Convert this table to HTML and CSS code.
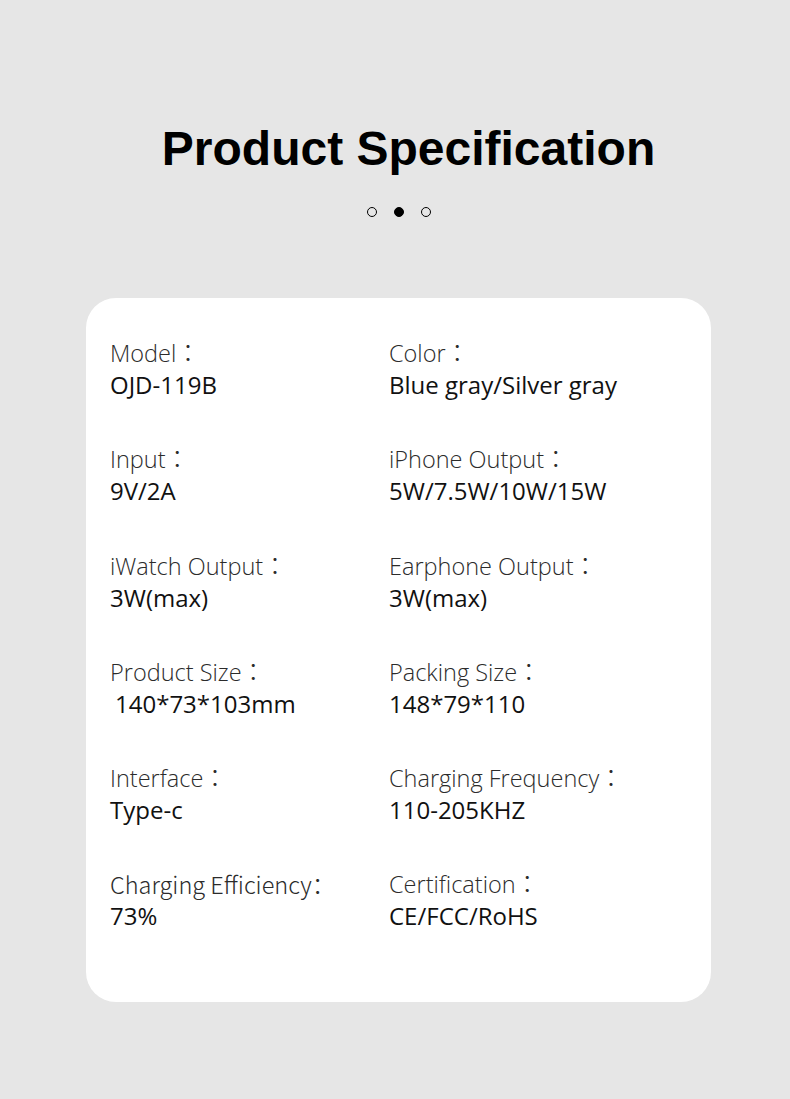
FILE: index.html
```html
<!DOCTYPE html>
<html>
<head>
<meta charset="utf-8">
<link rel="stylesheet" href="styles.css">
</head>
<body>
<div class="page">
  <h1 class="title">Product Specification</h1>
  <div class="dots"><span class="dot"></span><span class="dot filled"></span><span class="dot"></span></div>
  <div class="card">
    <div class="spec"><div class="label">Model：</div><div class="value">OJD-119B</div></div>
    <div class="spec"><div class="label">Color：</div><div class="value">Blue gray/Silver gray</div></div>
    <div class="spec"><div class="label">Input：</div><div class="value">9V/2A</div></div>
    <div class="spec"><div class="label">iPhone Output：</div><div class="value">5W/7.5W/10W/15W</div></div>
    <div class="spec"><div class="label">iWatch Output：</div><div class="value">3W(max)</div></div>
    <div class="spec"><div class="label">Earphone Output：</div><div class="value">3W(max)</div></div>
    <div class="spec"><div class="label">Product Size：</div><div class="value indent">140*73*103mm</div></div>
    <div class="spec"><div class="label">Packing Size：</div><div class="value">148*79*110</div></div>
    <div class="spec"><div class="label">Interface：</div><div class="value">Type-c</div></div>
    <div class="spec"><div class="label">Charging Frequency：</div><div class="value">110-205KHZ</div></div>
    <div class="spec"><div class="label condensed">Charging Efficiency：</div><div class="value">73%</div></div>
    <div class="spec"><div class="label">Certification：</div><div class="value">CE/FCC/RoHS</div></div>
  </div>
</div>
</body>
</html>
```
FILE: styles.css
```css
html, body {
  margin: 0;
  padding: 0;
  background: #e6e6e6;
}
.page {
  width: 790px;
  height: 1099px;
  padding: 121px 0 0 86px;
  box-sizing: border-box;
  display: flex;
  flex-direction: column;
  align-items: flex-start;
}
.title {
  align-self: stretch;
  width: 625px;
  box-sizing: border-box;
  padding-left: 20px;
  margin: 0;
  text-align: center;
  font-family: "Liberation Sans", Arial, sans-serif;
  font-weight: 700;
  font-size: 48px;
  line-height: 56px;
  color: #000;
}
.dots {
  width: 625px;
  margin-top: 30px;
  display: flex;
  justify-content: center;
  gap: 17px;
}
.dot {
  width: 10px;
  height: 10px;
  box-sizing: border-box;
  border: 1.4px solid #000;
  border-radius: 50%;
}
.dot.filled {
  background: #000;
}
.card {
  margin-top: 81px;
  width: 625px;
  height: 704px;
  box-sizing: border-box;
  background: #fff;
  border-radius: 30px;
  padding: 40px 0 0 24px;
  display: grid;
  grid-template-columns: 279px 1fr;
  grid-auto-rows: 106.3px;
  align-content: start;
}
.label {
  font-family: "Open Sans", "Noto Sans CJK TC", sans-serif;
  font-size: 23.5px;
  font-weight: 300;
  line-height: 31px;
  color: #2b2b2b;
}
.label.condensed {
  font-family: "Noto Sans CJK SC", sans-serif;
  font-size: 23.5px;
}
.value {
  font-family: "Open Sans", "Noto Sans CJK TC", sans-serif;
  font-size: 24px;
  font-weight: 400;
  line-height: 31px;
  color: #111;
}
.value.indent {
  padding-left: 5px;
}
```
